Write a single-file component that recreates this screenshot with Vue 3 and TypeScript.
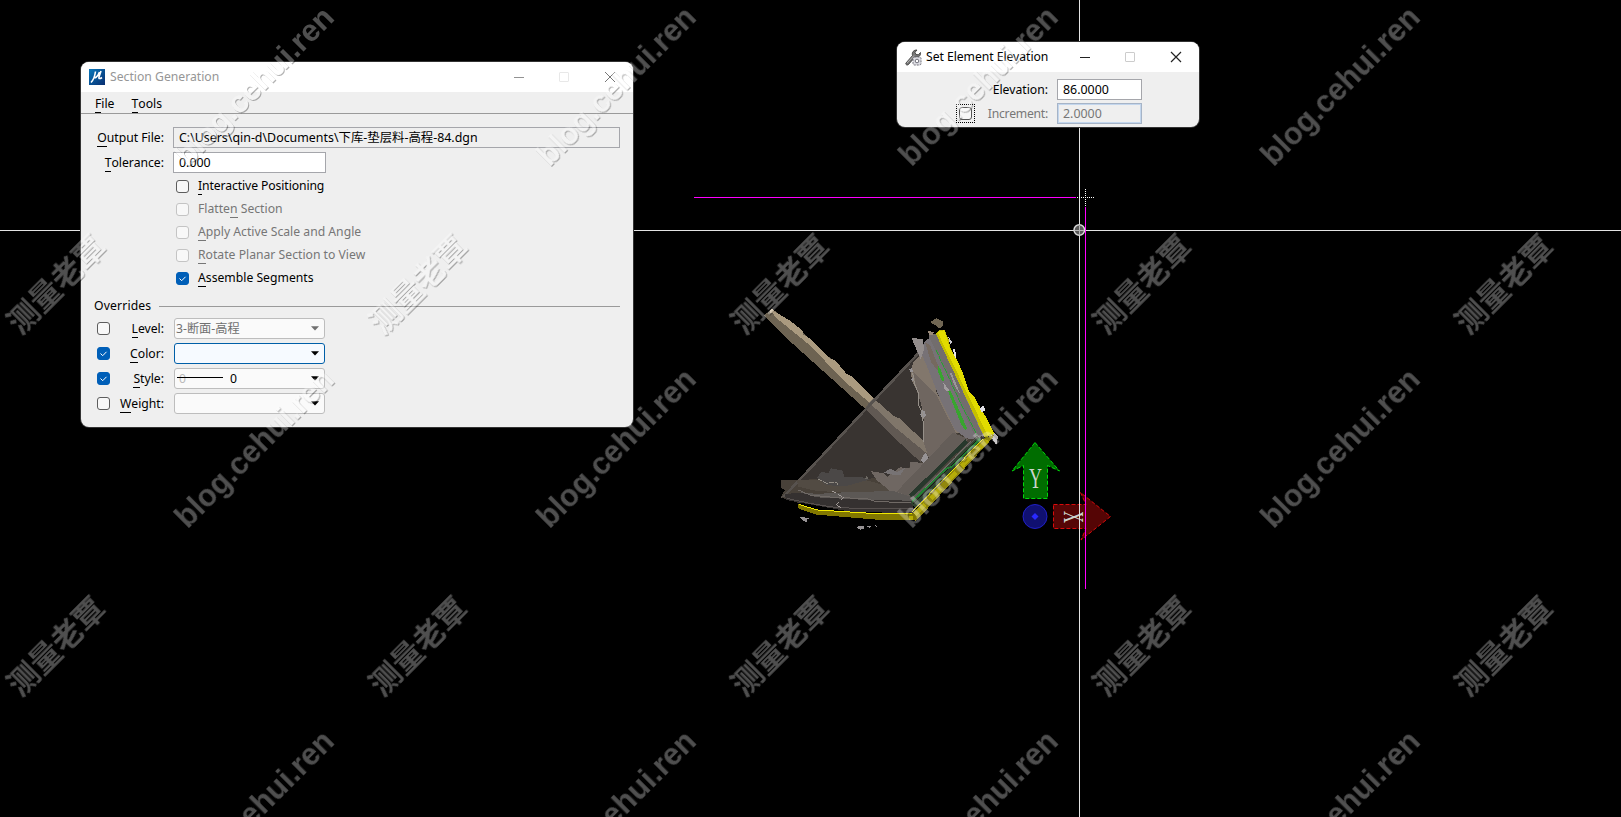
<script setup lang="ts">
interface Option { pre: string; key: string; post: string; on?: boolean; off?: boolean }
interface Override { key: string; post: string; on: boolean; kind: string }

const options: Option[] = [
  { pre: '', key: 'I', post: 'nteractive Positioning' },
  { pre: 'Flatte', key: 'n', post: ' Section', off: true },
  { pre: '', key: 'A', post: 'pply Active Scale and Angle', off: true },
  { pre: '', key: 'R', post: 'otate Planar Section to View', off: true },
  { pre: '', key: 'A', post: 'ssemble Segments', on: true },
]
const overrides: Override[] = [
  { key: 'L', post: 'evel:', on: false, kind: 'level' },
  { key: 'C', post: 'olor:', on: true, kind: 'color' },
  { key: 'S', post: 'tyle:', on: true, kind: 'style' },
  { key: 'W', post: 'eight:', on: false, kind: 'weight' },
]
const siteMarks = [187.5, 549.5, 911.5, 1273.5].flatMap(x => [167.5, 529.5, 891.5].map(y => ({ x, y })))
const nameMarks = [20.5, 382.5, 744.5, 1106.5, 1468.5].flatMap(x => [335.5, 697.5].map(y => ({ x, y })))
</script>

<template>
  <main class="desktop">
    <svg class="layer" width="1621" height="817" viewBox="0 0 1621 817">
      <!-- terrain model -->
      <g transform="translate(750 290) scale(.33333)" shape-rendering="crispEdges">
        <polygon fill="#393431" points="525,163 93,623 150,640 500,640 700,440 600,200" />
        <polygon fill="#6d6352" points="43,76 66,56 158,126 371,328 345,356 100,136" />
        <polygon fill="#aa9a7f" points="66,60 120,92 158,122 160,134 180,145 240,205 256,211 290,252 310,262 371,325 357,337 300,288 250,240 225,213 180,166 74,80" />
        <polygon fill="#c9b697" points="58,62 66,56 74,62 72,70 60,68" />
        <polygon fill="#615953" points="345,356 357,337 535,490 530,512 510,515 440,450" />
        <polygon fill="#80766a" points="357,337 371,325 430,377 450,386 530,462 530,490 440,416" />
        <polygon fill="#484139" points="92,570 140,570 190,568 270,572 352,568 392,560 440,555 500,520 545,510 620,430 690,440 500,630 350,640 150,640 93,620 105,600 92,594" />
        <polygon fill="#57524e" points="525,163 93,623 105,621 530,169" />
        <polygon fill="#524b43" points="140,570 230,572 340,568 400,585 440,605 280,607 200,603 145,590" />
        <polygon fill="#4b4847" points="202,563 214,545 236,550 242,535 278,542 283,562 330,560 360,568 290,588 230,586" />
        <polygon fill="#6f6762" points="362,543 400,550 413,560 450,532 480,535 480,515 525,520 536,504 530,450 610,430 655,447 487,620 420,603 380,570" />
        <polygon fill="#5c5855" points="280,607 430,603 487,622 680,440 690,446 490,638 380,632 200,625 145,605 200,612" />
        <polygon fill="#353130" points="155,608 200,622 350,630 490,632 490,670 300,665 190,645 110,630 104,612" />
        <polyline fill="none" stroke="#706a66" stroke-width="3" points="145,600 180,615 250,622 350,626 380,635 490,638 690,442" />
        <polyline fill="none" stroke="#57514f" stroke-width="3" points="110,625 180,640 260,653 400,657 490,657" />
        <polygon fill="#82776c" points="482,240 492,213 525,185 550,220 560,310 650,430 610,430 535,500 523,465 520,370 505,310 486,272" />
        <polygon fill="#6f6660" points="490,245 560,315 618,430 535,500 522,460 522,370 500,300" />
        <polygon fill="#777276" points="525,155 553,130 690,425 670,448 650,445 615,420 565,315 525,215 510,180" />
        <polygon fill="#938d8c" points="484,143 519,148 522,178 512,207" />
        <polygon fill="#75695f" points="525,158 540,165 575,255 545,220" />
        <polygon fill="#645d58" points="608,428 655,447 480,620 440,605" />
        <polyline fill="none" stroke="#27382c" stroke-width="12" points="650,452 482,618" />
        <polyline fill="none" stroke="#30442f" stroke-width="19" points="690,446 488,645" />
        <polyline fill="none" stroke="#73716c" stroke-width="3" points="665,452 490,629" />
        <polyline fill="none" stroke="#171b18" stroke-width="3" points="680,452 490,642" />
        <polyline fill="none" stroke="#238132" stroke-width="5" points="690,447 604,531 590,535 486,635" />
        <polyline fill="none" stroke="#827b83" stroke-width="4" points="704,448 488,662" />
        <polygon fill="#857f82" points="560,160 575,160 705,437 686,441" />
        <polygon fill="#726d6d" points="535,135 560,132 698,435 675,438" />
        <polygon fill="#38a52f" points="565,226 572,239 584,271 576,275 565,247" />
        <polygon fill="#38a52f" points="593,301 602,302 651,415 647,421 634,405" />
        <polyline fill="none" stroke="#26a333" stroke-width="3" stroke-dasharray="16 4" points="558,180 586,240 625,325 680,434" />
        <polygon fill="#a39ea0" points="580,278 598,300 591,305 582,296" />
        <polygon fill="#9b979a" points="600,250 604,248 620,285 631,314 615,290" />
        <polygon fill="#9a8a7a" points="535,124 553,125 548,136 536,134" />
        <polygon fill="#706653" points="543,95 560,84 570,91 580,94 579,107 567,116 560,107 545,101" />
        <polygon fill="#c5bf00" points="557,130 568,121 583,120 595,145 602,176 624,215 638,248 656,302 672,319 690,352 710,384 724,418 737,432 704,443" />
        <polygon fill="#e2dc00" points="562,126 583,120 600,176 624,215 638,248 656,302 672,319 690,352 710,384 733,432 712,434" />
        <polygon fill="#c9c7cf" points="595,139 606,156 602,164 597,154" />
        <polygon fill="#e6e4eb" points="608,179 615,177 620,202 616,205" />
        <polygon fill="#e0dfe5" points="690,356 699,346 706,360 695,368" />
        <polygon fill="#b6b2b4" points="734,430 744,440 739,465 728,448 718,441" />
        <polygon fill="#91870c" points="704,443 735,434 718,455 498,693 480,680 488,668" />
        <polyline fill="none" stroke="#efe800" stroke-width="3" points="699,447 486,666" />
        <polyline fill="none" stroke="#b5ac08" stroke-width="13" stroke-dasharray="42 25" points="711,450 494,676" />
        <polygon fill="#817700" points="144,642 202,659 380,670 492,670 503,690 380,689 200,674 146,656" />
        <polyline fill="none" stroke="#f1e900" stroke-width="3" points="146,643 202,660 380,671 486,672" />
        <circle cx="484" cy="684" r="7" fill="#b8ae00" />
        <g fill="#969294">
          <polygon points="478,238 486,234 490,247 480,246" /><polygon points="481,268 491,262 489,276" />
          <polygon points="515,360 526,364 527,379 518,386 511,374" />
          <polygon points="526,487 536,504 520,518 512,511" />
          <polygon points="150,681 180,684 172,688 172,697 160,692" />
          <polygon points="317,711 340,707 343,715 331,719" /><polygon points="350,709 366,708 358,713" />
          <polygon points="375,705 382,708 378,711" />
        </g>
        <polyline fill="none" stroke="#969089" stroke-width="3" points="488,250 494,283 505,308 507,347 518,370 522,455" />
        <polyline fill="none" stroke="#918b82" stroke-width="3" stroke-dasharray="14 5" points="203,566 230,580 260,576 266,588" />
        <polyline fill="none" stroke="#a29b98" stroke-width="3" stroke-dasharray="13 6" points="247,603 281,623 257,645 280,655" />
        <polygon fill="#6b6762" points="345,568 351,556 356,568" />
        <polygon fill="#777374" points="402,548 420,536 440,546 466,534 450,556 422,553" />
      </g>

      <!-- axis triad -->
      <g stroke-dasharray="4 2">
        <path fill="#006d00" stroke="#00d80a" d="M1035 442.5L1059.5 471L1047.5 465.5V498.500H1023.500V465.500L1012 471Z" />
        <path fill="#550505" stroke="#d90b0b" d="M1053.500 504.500H1086L1080.500 492.500L1110.500 516.500L1081 540L1086 528.500H1053.500Z" />
      </g>
      <circle cx="1035" cy="516.500" r="12" fill="#101070" stroke="#2020c8" />
      <path fill="#2929ff" d="M1035 513L1038.500 516.500L1035 520L1031.500 516.500Z" />
      <text class="axis" x="1035.500" y="488" textLength="13" lengthAdjust="spacingAndGlyphs">Y</text>
      <text class="axis" transform="translate(1064 517) rotate(90)" x="0" y="0" textLength="12" lengthAdjust="spacingAndGlyphs">X</text>

      <!-- crosshair and section line -->
      <g shape-rendering="crispEdges">
        <path stroke="#e4e4e4" d="M0 230.500H1621M1079.500 0V817" />
        <path stroke="#f0f" d="M694 197.500H1076M1085.500 207V589" />
        <path stroke="#fff" stroke-dasharray="1 1" d="M1077 197.500H1095M1085.500 189V207" />
      </g>
      <circle cx="1079.300" cy="230" r="5.300" fill="#585858" stroke="#dadada" stroke-width="1.500" />
      <path stroke="#b5b5b5" d="M1075 230.500h9M1079.500 226v9" />
    </svg>

    <section class="window section-window">
      <header class="titlebar">
        <svg width="16" height="16" viewBox="0 0 16 16">
          <defs><linearGradient id="logo" x2="1" y2="1"><stop stop-color="#0878bc" /><stop offset="1" stop-color="#092e70" /></linearGradient></defs>
          <path fill="url(#logo)" d="M0 0H16V16H0Z" />
          <path fill="none" stroke="#fff" stroke-width="1.600" d="M6.500 2.500C6 6 4.500 11 2 13.500M5.600 7C5 10 8 9.500 10.500 3M12 2L10 8C9.500 10 11 10 13 8.500" />
        </svg>
        <h1>Section Generation</h1>
        <svg class="caption" width="102" height="12" viewBox="0 0 102 12"><path stroke="#929292" d="M0 6.500h10" /><rect x="45.500" y="1.500" width="9" height="9" rx=".5" fill="none" stroke="#e8e8e8" /><path stroke="#777" d="M91 1L101 11M101 1L91 11" /></svg>
      </header>
      <nav class="menu"><span><u>F</u>ile</span><span><u>T</u>ools</span></nav>
      <div class="field first"><label><u>O</u>utput File:</label><div class="input path">C:\Users\qin-d\Documents\下库-垫层料-高程-84.dgn</div></div>
      <div class="field"><label><u>T</u>olerance:</label><div class="input tolerance">0.000</div></div>
      <div class="options">
        <div v-for="o in options" :key="o.post" class="option" :class="{ disabled: o.off }">
          <span class="check" :class="{ on: o.on }"><svg v-if="o.on" viewBox="0 0 13 13"><path d="M3.500 6.500L5.700 8.700L9.500 4.800" /></svg></span>
          <span>{{ o.pre }}<u>{{ o.key }}</u>{{ o.post }}</span>
        </div>
      </div>
      <div class="group-title"><span>Overrides</span><i></i></div>
      <div v-for="o in overrides" :key="o.kind" class="override">
        <span class="check" :class="{ on: o.on }"><svg v-if="o.on" viewBox="0 0 13 13"><path d="M3.500 6.500L5.700 8.700L9.500 4.800" /></svg></span>
        <label><u>{{ o.key }}</u>{{ o.post }}</label>
        <div class="combo" :class="o.kind">
          <span v-if="o.kind === 'level'" class="level-name">3-断面-高程</span>
          <template v-if="o.kind === 'style'"><span class="ghost">0</span><i class="stroke"></i><span class="style-name">0</span></template>
          <svg class="arrow" width="8" height="5" viewBox="0 0 8 5"><path d="M0 .3H8L4 4.500Z" /></svg>
        </div>
      </div>
    </section>

    <section class="window elevation-window">
      <header class="titlebar">
        <svg width="17" height="17" viewBox="0 0 17 17">
          <path fill="#777" stroke="#333" stroke-width=".8" d="M1 14L7.500 6.500C6.500 3 9 .8 12 1L10 3.300L11 5.500L13.300 5.700L15.500 3.500C16 7 13 9 10 8L3.500 15.500C2 17 0 15 1 14Z" />
          <path fill="none" stroke="#b5b5b5" d="M2 14L9 6.500" />
          <rect x="8" y="8" width="8" height="8" rx="1.500" fill="#dedee4" stroke="#70707a" stroke-dasharray="2 1" /><circle cx="12" cy="12" r="1.800" fill="#fff" stroke="#70707a" />
        </svg>
        <h1>Set Element Elevation</h1>
        <svg class="caption" width="102" height="12" viewBox="0 0 102 12"><path stroke="#222" d="M0 6.500h10" /><rect x="45.500" y="1.500" width="9" height="9" rx=".5" fill="none" stroke="#ccc" /><path stroke="#222" stroke-width="1.200" d="M91 1L101 11M101 1L91 11" /></svg>
      </header>
      <div class="value-row"><span></span><label>Elevation:</label><div class="input">86.0000</div></div>
      <div class="value-row disabled"><span class="focus"><span class="check"></span></span><label class="wide">Increment:</label><div class="input">2.0000</div></div>
    </section>

    <svg class="layer" width="1621" height="817" viewBox="0 0 1621 817">
      <defs>
        <filter id="emboss" filterUnits="userSpaceOnUse" x="0" y="0" width="1621" height="817" color-interpolation-filters="sRGB">
          <feOffset in="SourceAlpha" dx=".8" dy=".8" /><feGaussianBlur stdDeviation=".6" />
          <feComposite in2="SourceAlpha" operator="out" result="edge" />
          <feComponentTransfer in="edge" result="shade"><feFuncA type="linear" slope=".3" /></feComponentTransfer>
          <feComponentTransfer in="SourceGraphic" result="face"><feFuncA type="linear" slope=".31" /></feComponentTransfer>
          <feMerge><feMergeNode in="shade" /><feMergeNode in="face" /></feMerge>
        </filter>
      </defs>
      <g class="marks" filter="url(#emboss)">
        <text v-for="m in siteMarks" :key="`s${m.x}-${m.y}`" :transform="`translate(${m.x} ${m.y}) rotate(-45)`">blog.cehui.ren</text>
        <text v-for="m in nameMarks" :key="`n${m.x}-${m.y}`" :transform="`translate(${m.x} ${m.y}) rotate(-45)`">测量老覃</text>
      </g>
    </svg>
  </main>
</template>

<style>
body { background: #000; overflow: hidden; }
</style>

<style scoped>
.desktop { position: relative; width: 1621px; height: 817px; overflow: hidden; background: #000; color: #000; font: 12.2px/20px "Noto Sans", "Noto Sans CJK SC", sans-serif; }
.desktop * { box-sizing: border-box; }
.layer { position: absolute; inset: 0; display: block; pointer-events: none; }
.axis { fill: #ccd4cc; font: 30px "Liberation Serif", serif; text-anchor: middle; }
.marks { fill: #fff; font: bold 30.700px "Liberation Sans", "Noto Sans CJK SC", sans-serif; }
.window { position: absolute; background: #efefef; border-radius: 8px; overflow: hidden; white-space: nowrap; box-shadow: 0 0 0 1px #333; }
.section-window { left: 81px; top: 62px; width: 552px; height: 365px; }
.elevation-window { left: 897px; top: 42px; width: 302px; height: 85px; }
.titlebar { display: flex; align-items: center; height: 30px; padding: 0 17px 0 8px; background: #fff; }
.section-window .titlebar { color: #969696; }
h1 { margin: 0 0 0 5px; font: inherit; }
.elevation-window h1 { margin-left: 4px; letter-spacing: -.05px; }
.caption { margin-left: auto; }
u { text-decoration: none; display: inline-block; height: 18px; line-height: 18px; border-bottom: 1px solid currentColor; vertical-align: baseline; }
.menu { display: flex; gap: 17px; height: 22px; padding: 2px 0 0 14px; border-bottom: 1px solid #9a9a9a; line-height: 20px; }
.field { display: grid; grid-template-columns: 83px 1fr; column-gap: 9px; padding-right: 13px; margin-top: 4px; height: 21px; align-items: center; }
.field.first { margin-top: 13px; }
label { text-align: right; }
.input { height: 21px; padding-left: 5px; border: 1px solid #a5a6ab; background: #fff; line-height: 19px; font-size: 12.4px; }
.input.path { background: #efefef; }
.input.tolerance { width: 153px; }
.options { margin-top: 2px; padding-left: 95px; }
.option { display: flex; align-items: center; gap: 9px; height: 23px; }
.option > span:last-child { margin-top: -2px; }
.option:first-child { letter-spacing: -.1px; }
.option.disabled { color: #767676; }
.check { display: block; flex: none; width: 13px; height: 13px; border: 1px solid #5d5d5d; border-radius: 3px; background: #f8f8f8; }
.disabled .check { border-color: #c4c4c4; }
.check.on { background: #005fb8; border-color: #005fb8; }
.check.on svg { display: block; width: 13px; height: 13px; margin: -1px; }
.check.on path { fill: none; stroke: #fff; stroke-width: 1; }
.group-title { display: flex; align-items: center; height: 24px; margin-top: 4px; padding: 0 13px; gap: 8px; letter-spacing: .15px; }
.group-title i { flex: 1; height: 1px; background: #9a9a9a; }
.override { display: grid; grid-template-columns: 13px 54px 151px; column-gap: 0; height: 21px; margin: 0 0 4px 16px; align-items: center; }
.override .combo { margin-left: 10px; width: 151px; }
.combo { display: flex; align-items: center; height: 21px; padding: 0 5px 0 2px; border: 1px solid #bdbdbd; border-radius: 3px; background: #fafafa; }
.combo.color { border-color: #005fa8; background: #f6faff; }
.combo.level { color: #707070; }
.level-name { margin-left: -1px; }
.arrow { margin-left: auto; fill: currentColor; }
.ghost { color: #bbb; width: 8px; margin-left: 2px; }
.stroke { width: 46px; height: 1px; margin: -2px 0 0 -10px; background: #000; }
.style-name { margin-left: 7px; }
.value-row { display: grid; grid-template-columns: 20px 72px 85px; column-gap: 0; margin: 7px 0 0 59px; height: 21px; align-items: center; }
.value-row .input { margin-left: 9px; width: 85px; }
.value-row .wide { letter-spacing: -.25px; }
.value-row.disabled { margin-top: 3px; color: #777; }
.value-row.disabled .input { background: #efefef; border-color: #a6b4c7; box-shadow: inset 0 0 0 1px #c3d6ed; }
.focus { display: grid; place-items: center; width: 19px; height: 19px; border: 1px dotted #000; }
.focus .check { border-color: #555; }
</style>
